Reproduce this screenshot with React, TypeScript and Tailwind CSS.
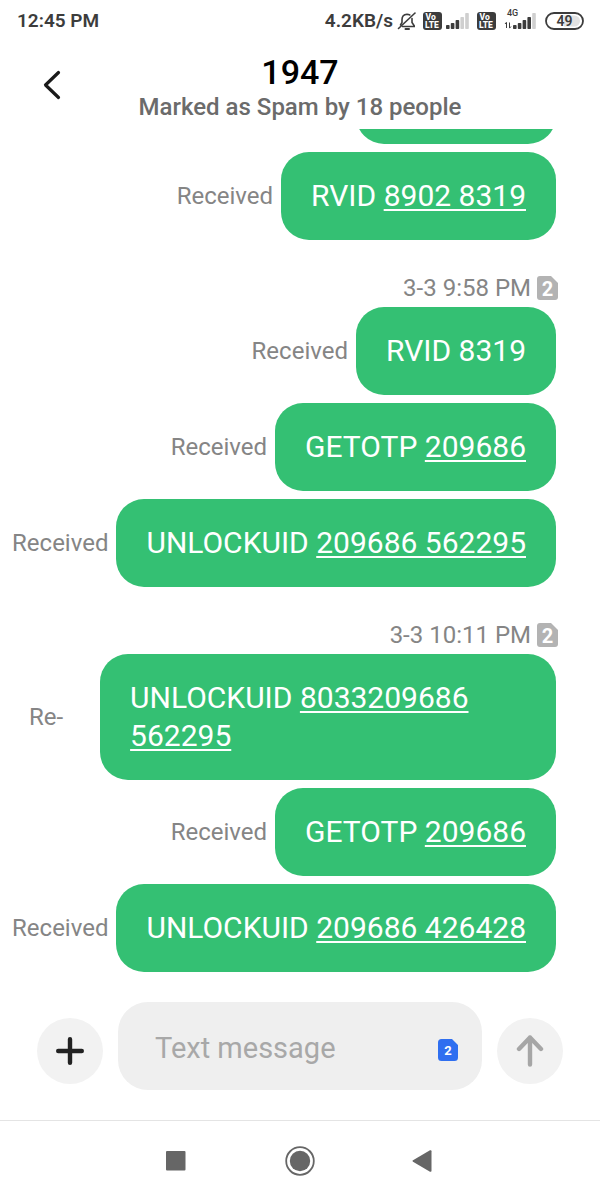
import type { ReactNode } from "react"
import { clsx } from "clsx"

type Message = { label: string; text: string; numbers?: string[] }
type Group = { time?: string; messages: Message[] }

const groups: Group[] = [
    {
        messages: [{ label: "Received", text: "RVID", numbers: ["8902 8319"] }],
    },
    {
        time: "3-3 9:58 PM",
        messages: [
            { label: "Received", text: "RVID 8319" },
            { label: "Received", text: "GETOTP", numbers: ["209686"] },
            { label: "Received", text: "UNLOCKUID", numbers: ["209686 562295"] },
        ],
    },
    {
        time: "3-3 10:11 PM",
        messages: [
            { label: "Re-", text: "UNLOCKUID", numbers: ["8033209686", "562295"] },
            { label: "Received", text: "GETOTP", numbers: ["209686"] },
            { label: "Received", text: "UNLOCKUID", numbers: ["209686 426428"] },
        ],
    },
]

function VoLte() {
    return (
        <svg width="19" height="18" viewBox="0 0 19 18" aria-label="VoLTE">
            <rect width="19" height="18" rx="3" fill="#3c3c3c" />
            <text x="2.500" y="8" fontSize="8.500" fontWeight="800" fill="#fff">Vo</text>
            <text x="2" y="16" fontSize="8.500" fontWeight="800" fill="#fff">LTE</text>
        </svg>
    )
}

function Bars({ filled }: { filled: number }) {
    return (
        <g>
            {[4, 6, 9, 12, 16].map((h, i) => (
                <rect key={h} x={i * 4.8} y={16 - h} width="3.6" height={h} rx="0.8" fill={i < filled ? "#3c3c3c" : "#cfcfcf"} />
            ))}
        </g>
    )
}

function StatusBar() {
    return (
        <div className="flex h-[42px] shrink-0 items-center justify-between pr-4 pl-[17px] text-[19px] font-semibold text-[#3c3c3c]">
            <span>12:45 PM</span>
            <div className="flex items-center">
                <span>4.2KB/s</span>
                <svg className="ml-1" width="20" height="20" viewBox="0 0 20 20" fill="none" stroke="#3c3c3c" strokeWidth="1.6" strokeLinecap="round">
                    <path d="M5 11V8.5C5 5.500 7 3.500 10 3.200C11 3.200 12 3.500 12.800 4M15 7.500V11.500L17.200 14.800V15.500H5.500M3.500 14L5 11.500" />
                    <path d="M8.500 18H12" strokeWidth="2" />
                    <path d="M1.500 17.500L18 2" />
                </svg>
                <span className="ml-1.5"><VoLte /></span>
                <svg className="ml-1" width="23" height="17" viewBox="0 0 23 17">
                    <Bars filled={3} />
                </svg>
                <span className="ml-2"><VoLte /></span>
                <svg className="ml-2" width="33" height="28" viewBox="0 0 33 28">
                    <text x="3" y="9" fontSize="9" fontWeight="500" fill="#3c3c3c">4G</text>
                    <path d="M2.500 21V15.500M1 17L2.500 15.200M5.500 15.500V21M7 19.500L5.500 21.200" stroke="#3c3c3c" strokeWidth="1" fill="none" />
                    <g transform="translate(9 6)">
                        <Bars filled={4} />
                    </g>
                </svg>
                <svg className="ml-2" width="39" height="18" viewBox="0 0 39 18" aria-label="Battery 49%">
                    <rect x="1" y="1" width="37" height="16" rx="8" fill="#fff" stroke="#3c3c3c" strokeWidth="1.800" />
                    <path d="M19 3.500H29.500A5.500 5.500 0 0 1 29.500 14.500H19Z" fill="#e2e2e2" />
                    <text x="19.500" y="14" fontSize="14" fontWeight="600" fill="#3c3c3c" textAnchor="middle">49</text>
                </svg>
            </div>
        </div>
    )
}

function Header() {
    return (
        <header className="grid shrink-0 grid-cols-[1fr_auto_1fr] items-center pt-3 pb-[5px]">
            <button aria-label="Back" className="mb-2 ml-8 flex size-10 items-center justify-center">
                <svg width="18" height="30" viewBox="0 0 18 30" fill="none" stroke="#1a1a1a" strokeWidth="3.2" strokeLinecap="round" strokeLinejoin="round">
                    <path d="M15.500 2.500L2.500 15L15.500 27.500" />
                </svg>
            </button>
            <div className="text-center font-medium">
                <h1 className="text-[34px] leading-9 text-black">1947</h1>
                <p className="text-2xl leading-[34px] text-[#6b6b6b]">Marked as Spam by 18 people</p>
            </div>
        </header>
    )
}

function SimIcon({ className, size }: { className?: string; size: number }) {
    return (
        <svg className={className} width={size} height={size + 3} viewBox="0 0 21 24">
            <path d="M3 0H14L21 7V21A3 3 0 0 1 18 24H3A3 3 0 0 1 0 21V3A3 3 0 0 1 3 0Z" fill="currentColor" />
            <text x="10.500" y="19.500" fontSize="20" fontWeight="700" fill="#fff" textAnchor="middle">2</text>
        </svg>
    )
}

function Bubble({ label, text, numbers = [] }: Message) {
    const short = label === "Re-"
    return (
        <li className="flex items-center justify-end pr-11">
            <span className={clsx("text-2xl text-[#858585]", short ? "flex-1 pr-2 text-center" : "mr-2")}>{label}</span>
            <p className={clsx("rounded-[28px] bg-[#34c073] px-[30px] py-[25px] text-[30px] leading-[38px] text-white", short && "w-[82%] shrink-0")}>
                {text}
                {numbers.map((number) => (
                    <span key={number}>
                        {" "}
                        <a href="#" className="underline decoration-2 underline-offset-3">{number}</a>
                    </span>
                ))}
            </p>
        </li>
    )
}

function NavButton({ label, children }: { label: string; children: ReactNode }) {
    return (
        <button aria-label={label} className="flex h-full w-[123px] items-center justify-center text-[#666]">
            {children}
        </button>
    )
}

export default function App() {
    return (
        <div className="flex h-screen flex-col bg-white font-[Roboto,sans-serif]">
            <StatusBar />
            <Header />

            <main className="flex min-h-0 flex-1 flex-col justify-end overflow-hidden">
                {/* older message, scrolled under the header */}
                <div className="mr-11 mb-2 h-22 w-[200px] shrink-0 self-end rounded-[28px] bg-[#34c073]" />
                {groups.map((group, i) => (
                    <section key={i} className="shrink-0">
                        {group.time && (
                            <div className="flex items-center justify-end pt-[33px] pr-[42px] pb-[3px] text-2xl leading-[31px] text-[#858585]">
                                <time>{group.time}</time>
                                <SimIcon size={21} className="mb-0.5 ml-1.5 text-[#b3b3b3]" />
                            </div>
                        )}
                        <ul className="flex flex-col gap-2">
                            {group.messages.map((message, j) => (
                                <Bubble key={j} {...message} />
                            ))}
                        </ul>
                    </section>
                ))}
            </main>

            <form className="flex shrink-0 items-end gap-[15px] px-[37px] py-[30px]">
                <button type="button" aria-label="Add" className="mb-1.5 flex size-[66px] shrink-0 items-center justify-center rounded-full bg-[#f2f2f2]">
                    <svg width="28" height="28" viewBox="0 0 28 28" stroke="#222" strokeWidth="4.4" strokeLinecap="round">
                        <path d="M14 2.200V25.800M2.200 14H25.800" />
                    </svg>
                </button>
                <div className="flex h-22 min-w-0 flex-1 items-center rounded-[30px] bg-[#efefef] pr-6 pl-[37px]">
                    <input
                        aria-label="Text message"
                        placeholder="Text message"
                        className="min-w-0 flex-1 pt-1 text-[29px] leading-10 outline-none placeholder:text-[#a8a8a8]"
                    />
                    <button type="button" aria-label="SIM 2" className="pt-2">
                        <svg width="20" height="22" viewBox="0 0 20 22">
                            <path d="M3.500 0H14L20 6V18.500A3.500 3.500 0 0 1 16.500 22H3.500A3.500 3.500 0 0 1 0 18.500V3.500A3.500 3.500 0 0 1 3.500 0Z" fill="#2f6ff0" />
                            <text x="10" y="16" fontSize="13" fontWeight="700" fill="#fff" textAnchor="middle">2</text>
                        </svg>
                    </button>
                </div>
                <button aria-label="Send" className="mb-1.5 flex size-[66px] shrink-0 items-center justify-center rounded-full bg-[#f2f2f2]">
                    <svg width="28" height="32" viewBox="0 0 28 32" fill="none" stroke="#a6a6a6" strokeWidth="4.4" strokeLinecap="round" strokeLinejoin="round">
                        <path d="M14 29.500V2.500M3 14L14 2.500L25 14" />
                    </svg>
                </button>
            </form>

            <nav className="flex h-20 shrink-0 justify-center border-t border-[#e4e4e4]">
                <NavButton label="Recent apps">
                    <svg width="22" height="20" viewBox="0 0 22 20">
                        <rect width="19.500" height="19.500" rx="1" fill="currentColor" />
                    </svg>
                </NavButton>
                <NavButton label="Home">
                    <svg width="30" height="30" viewBox="0 0 30 30">
                        <circle cx="15" cy="15" r="13.800" fill="none" stroke="currentColor" strokeWidth="1.800" />
                        <circle cx="15" cy="15" r="10.200" fill="currentColor" />
                    </svg>
                </NavButton>
                <NavButton label="Back to previous">
                    <svg width="22" height="22" viewBox="0 0 22 22">
                        <path d="M1 10.300L18 0.300Q19.500 -0.300 19.500 1.300V20.700Q19.500 22.300 18 21.700L1 11.700Q0 11 1 10.300Z" fill="currentColor" />
                    </svg>
                </NavButton>
            </nav>
        </div>
    )
}
